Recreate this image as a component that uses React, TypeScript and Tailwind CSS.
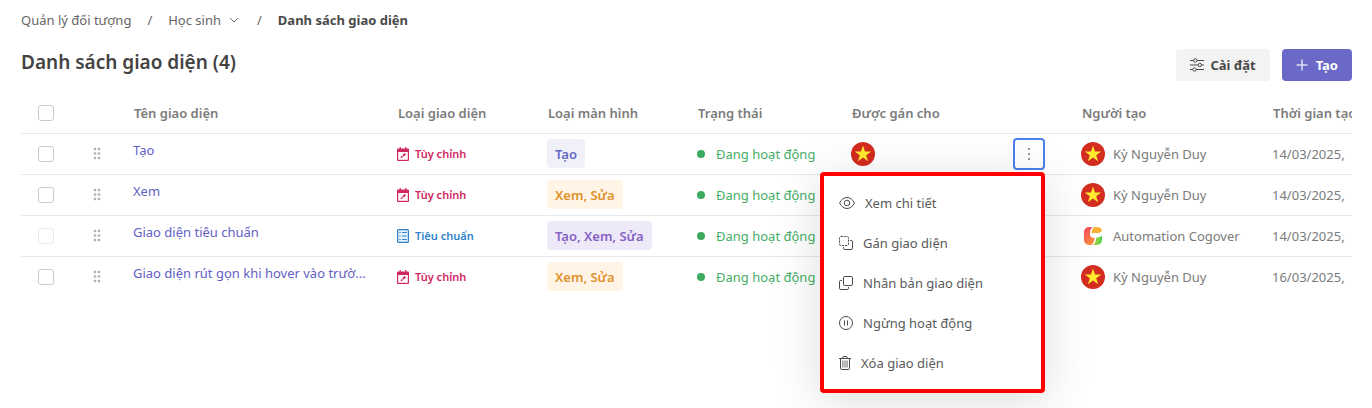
import type { ReactNode } from "react";

/* ------------------------------
   DATA
-------------------------------- */
type ScreenKind = "create" | "edit" | "all";

const ROWS: {
  id: number;
  name: string;
  custom: boolean;
  screen: string;
  kind: ScreenKind;
  creator: string;
  date: string;
}[] = [
  { id: 1, name: "Tạo", custom: true, screen: "Tạo", kind: "create", creator: "Kỳ Nguyễn Duy", date: "14/03/2025," },
  { id: 2, name: "Xem", custom: true, screen: "Xem, Sửa", kind: "edit", creator: "Kỳ Nguyễn Duy", date: "14/03/2025," },
  { id: 3, name: "Giao diện tiêu chuẩn", custom: false, screen: "Tạo, Xem, Sửa", kind: "all", creator: "Automation Cogover", date: "14/03/2025," },
  { id: 4, name: "Giao diện rút gọn khi hover vào trườ...", custom: true, screen: "Xem, Sửa", kind: "edit", creator: "Kỳ Nguyễn Duy", date: "16/03/2025," },
];

const TAG_STYLES: Record<ScreenKind, string> = {
  create: "bg-[#f0f0f9] text-[#6467c6]",
  edit: "bg-[#fff4e5] text-[#e0912c]",
  all: "bg-[#eee9f8] text-[#8561c2]",
};

/* ------------------------------
   ICONS
-------------------------------- */
const ChevronIcon = () => (
  <svg width="10" height="10" viewBox="0 0 10 10" fill="none" stroke="#666">
    <path d="M1.2 3.2L5 7l3.8-3.8" />
  </svg>
);

const SlidersIcon = () => (
  <svg width="14" height="14" viewBox="0 0 14 14" fill="none" stroke="#4a4a4a">
    <path d="M0 2.5h3.5M7 2.5h7M0 7h8M11.5 7H14M0 11.5h2.7M6.3 11.5H14" />
    <circle cx="5.2" cy="2.5" r="1.7" />
    <circle cx="9.8" cy="7" r="1.7" />
    <circle cx="4.5" cy="11.5" r="1.7" />
  </svg>
);

const PlusIcon = () => (
  <svg width="12" height="12" viewBox="0 0 12 12" fill="none" stroke="#dcdcf5" strokeWidth="1.5">
    <path d="M6 .5v11M.5 6h11" />
  </svg>
);

const GripIcon = () => (
  <svg width="8" height="13" viewBox="0 0 8 13" fill="none" stroke="#888" strokeWidth="0.8">
    {[2, 6.5, 11].map((y) => (
      <g key={y}>
        <circle cx="2" cy={y} r="0.9" />
        <circle cx="6" cy={y} r="0.9" />
      </g>
    ))}
  </svg>
);

const CustomIcon = () => (
  <svg className="shrink-0" width="12" height="14" viewBox="0 0 12 14">
    <path d="M2.6 0h1.2v1.4h4.4V0h1.2v1.4H11a1 1 0 0 1 1 1V13a1 1 0 0 1-1 1H1a1 1 0 0 1-1-1V2.4a1 1 0 0 1 1-1h1.6z" fill="#d1275f" />
    <path d="M1.2 5h9.6v7.8H1.2z" fill="#fff" />
    <path d="M3.6 11.2l.4-1.6.7-.7 1.2 1.2-.7.7zM5.3 8.300l2-2 .6-.2.900.9-.2.700-2 2z" fill="#d1275f" />
  </svg>
);

const StandardIcon = () => (
  <svg className="shrink-0" width="12" height="14" viewBox="0 0 12 14" fill="none" stroke="#2f83cb">
    <rect x="0.6" y="0.6" width="10.8" height="12.8" rx="1" strokeWidth="1.2" fill="#e4f1fb" />
    <path d="M2.3 3.5h1.4M5 3.5h4.7M2.3 7h1.4M5 7h4.7M2.3 10.500h1.4M5 10.500h4.7" />
  </svg>
);

const DotsIcon = () => (
  <svg width="4" height="14" viewBox="0 0 4 14" fill="#777">
    <circle cx="2" cy="2" r="1" />
    <circle cx="2" cy="7" r="1" />
    <circle cx="2" cy="12" r="1" />
  </svg>
);

const FlagAvatar = () => (
  <svg className="shrink-0" width="24" height="24" viewBox="0 0 24 24">
    <circle cx="12" cy="12" r="12" fill="#d32c20" />
    <path d="M12 3.500l2 6h6.200l-5 3.700 1.900 6-5.100-3.700-5.100 3.700 1.900-6-5-3.700H10z" fill="#ffeb2e" />
  </svg>
);

const CogoverLogo = () => (
  <svg className="shrink-0" width="24" height="24" viewBox="0 0 24 24">
    <defs>
      <linearGradient id="cg-left" x1="0" y1="0" x2="0.5" y2="1">
        <stop offset="0" stopColor="#f4405f" />
        <stop offset="1" stopColor="#fb8f3e" />
      </linearGradient>
      <linearGradient id="cg-right" x1="0" y1="0" x2="1" y2="0">
        <stop offset="0" stopColor="#b9c83a" />
        <stop offset="1" stopColor="#4fd54f" />
      </linearGradient>
    </defs>
    <path d="M8 3h3.500C9.800 4.500 9 6.500 9 9v1.500c0 2 1.200 3.200 3.200 3.200h1.300c0 3.300-1 5.800-3.200 7.300H8a5 5 0 0 1-5-5V8a5 5 0 0 1 5-5z" fill="url(#cg-left)" />
    <path d="M13.500 3H16c2.800 0 4.600 1.500 5 4-1.500 1.700-3.300 2-5.500 2H10.700c0-2.700.8-4.800 2.800-6z" fill="#fbb034" />
    <path d="M21 11.500V16a5 5 0 0 1-5 5h-3.700c1.900-1.700 2.800-4.300 2.900-7.400 2.400-.1 4.300-.7 5.800-2.100z" fill="url(#cg-right)" />
  </svg>
);

const EyeIcon = () => (
  <svg width="16" height="14" viewBox="0 0 16 14" fill="none" stroke="#4a4a4a">
    <path d="M.6 7C2.4 3.4 5 1.5 8 1.5S13.6 3.4 15.4 7C13.6 10.6 11 12.5 8 12.5S2.4 10.6.6 7z" />
    <circle cx="8" cy="7" r="2.8" />
  </svg>
);

const AssignIcon = () => (
  <svg width="14" height="14" viewBox="0 0 14 14" fill="none" stroke="#4a4a4a">
    <rect x="0.5" y="0.5" width="9" height="9" rx="1.5" strokeDasharray="2.2 1" />
    <path d="M11 4.500h1.200a1.300 1.300 0 0 1 1.300 1.300v6.400a1.300 1.300 0 0 1-1.300 1.300H5.800a1.300 1.300 0 0 1-1.300-1.300V11" />
  </svg>
);

const CopyIcon = () => (
  <svg width="14" height="14" viewBox="0 0 14 14" fill="none" stroke="#4a4a4a">
    <rect x="4.5" y="0.5" width="9" height="9" rx="1.3" />
    <path d="M3 4.500H1.800A1.300 1.300 0 0 0 .5 5.800v6.400a1.300 1.300 0 0 0 1.300 1.300h6.400a1.300 1.300 0 0 0 1.300-1.300V11" />
  </svg>
);

const PauseIcon = () => (
  <svg width="14" height="14" viewBox="0 0 14 14" fill="none" stroke="#4a4a4a">
    <circle cx="7" cy="7" r="6.5" />
    <path d="M5.500 4.500v5M8.500 4.500v5" />
  </svg>
);

const TrashIcon = () => (
  <svg width="12" height="14" viewBox="0 0 12 14" fill="none" stroke="#4a4a4a">
    <path d="M0 2.500h12M3.500 2.300L4.300.5h3.400l.8 1.800M1.500 2.500v9.700a1.300 1.300 0 0 0 1.300 1.300h6.400a1.300 1.300 0 0 0 1.300-1.300V2.500" />
    <path d="M3.900 4.500v7M6 4.500v7M8.100 4.500v7" strokeWidth="0.8" />
  </svg>
);

/* ------------------------------
   SUB-COMPONENTS
-------------------------------- */
const MENU: { label: string; icon: ReactNode }[] = [
  { label: "Xem chi tiết", icon: <EyeIcon /> },
  { label: "Gán giao diện", icon: <AssignIcon /> },
  { label: "Nhân bản giao diện", icon: <CopyIcon /> },
  { label: "Ngừng hoạt động", icon: <PauseIcon /> },
  { label: "Xóa giao diện", icon: <TrashIcon /> },
];

const RowMenu = () => (
  <div
    role="menu"
    className="absolute top-[34px] right-0 z-10 w-[225px] rounded-sm border-4 border-[#ff0000] bg-white pt-[7px] pb-1.5 shadow-[0_8px_50px_rgba(0,0,0,0.14)]"
  >
    {MENU.map((item) => (
      <button
        key={item.label}
        role="menuitem"
        className="flex h-10 w-full items-center gap-2.5 pl-[15px] text-left text-[#5a5a5a]"
      >
        {item.icon}
        {item.label}
      </button>
    ))}
  </div>
);

const Checkbox = ({ label, disabled }: { label: string; disabled?: boolean }) => (
  <input
    type="checkbox"
    aria-label={label}
    disabled={disabled}
    className="block size-4 appearance-none rounded-[3px] border border-[#cbcbcb] bg-white disabled:border-[#ebebeb]"
  />
);

/* ------------------------------
   MAIN COMPONENT
-------------------------------- */
export default function App() {
  return (
    <div className="flex min-h-screen flex-col bg-white pr-5 pl-[21px] font-['Noto_Sans',sans-serif] text-[13px] leading-5 text-[#7b7b7b]">
      <nav className="flex items-center pt-2.5 text-[#666]">
        <a href="#objects">Quản lý đối tượng</a>
        <span className="px-4">/</span>
        <a href="#student" className="flex items-center gap-2">
          Học sinh
          <ChevronIcon />
        </a>
        <span className="pr-4 pl-[18px]">/</span>
        <span className="font-bold text-[#4a4a4a]">Danh sách giao diện</span>
      </nav>

      <header className="mt-[19px] flex items-start justify-between">
        <h1 className="text-[19px] leading-[26px] font-semibold text-[#434343]">Danh sách giao diện (4)</h1>
        <div className="flex gap-3 font-bold">
          <button className="flex h-8 items-center gap-1.5 rounded bg-[#f3f3f3] px-3.5 text-[#4a4a4a]">
            <SlidersIcon />
            Cài đặt
          </button>
          <button className="flex h-8 items-center gap-2 rounded bg-[#6a69c8] px-3.5 text-white">
            <PlusIcon />
            Tạo
          </button>
        </div>
      </header>

      <div className="mt-3 flex-1 overflow-hidden">
        <table className="w-full min-w-[1436px] table-fixed text-left">
          <thead>
            <tr className="h-10 border-b border-[#e8e8eb] *:font-semibold">
              <th className="w-[50px] pl-[17px]">
                <Checkbox label="Chọn tất cả" />
              </th>
              <th className="w-[46px]" />
              <th className="w-[264px] pl-[17px]">Tên giao diện</th>
              <th className="w-[150px] pl-[17px]">Loại giao diện</th>
              <th className="w-[150px] pl-[17px]">Loại màn hình</th>
              <th className="w-[154px] pl-[17px]">Trạng thái</th>
              <th className="w-[230px] pl-[17px]">Được gán cho</th>
              <th className="w-[191px] pl-[17px]">Người tạo</th>
              <th className="pl-[17px]">Thời gian tạo</th>
            </tr>
          </thead>
          <tbody>
            {ROWS.map((row) => (
              <tr key={row.id} className="h-[41px] border-b border-[#e8e8eb] last:border-b-0">
                <td className="pl-[17px]">
                  <Checkbox label={row.name} disabled={!row.custom} />
                </td>
                <td className="pl-[22px]">
                  <GripIcon />
                </td>
                <td className="pb-2 pl-4">
                  <a href={`#layout-${row.id}`} className="block whitespace-nowrap text-[#5f61c4]">
                    {row.name}
                  </a>
                </td>
                <td className="pl-4">
                  <span
                    className={`flex items-center gap-1.5 text-[11px] font-semibold ${row.custom ? "text-[#d1275f]" : "text-[#2f83cb]"}`}
                  >
                    {row.custom ? <CustomIcon /> : <StandardIcon />}
                    {row.custom ? "Tùy chỉnh" : "Tiêu chuẩn"}
                  </span>
                </td>
                <td className="pl-4">
                  <span className={`inline-flex h-[29px] items-center rounded px-2 align-middle font-semibold ${TAG_STYLES[row.kind]}`}>
                    {row.screen}
                  </span>
                </td>
                <td className="pl-4">
                  <span className="flex items-center gap-[11px] whitespace-nowrap text-[#45ad66]">
                    <span className="size-2 rounded-full bg-[#3dab5f]" />
                    Đang hoạt động
                  </span>
                </td>
                <td className="pr-5 pl-4">
                  {row.id === 1 && (
                    <div className="flex items-center justify-between">
                      <FlagAvatar />
                      <div className="relative">
                        <button
                          aria-label="Thao tác"
                          aria-expanded="true"
                          className="flex size-8 items-center justify-center rounded border-2 border-[#4a80e8] bg-white"
                        >
                          <DotsIcon />
                        </button>
                        <RowMenu />
                      </div>
                    </div>
                  )}
                </td>
                <td className="pl-4">
                  <span className="flex items-center gap-2 whitespace-nowrap">
                    {row.custom ? <FlagAvatar /> : <CogoverLogo />}
                    {row.creator}
                  </span>
                </td>
                <td className="pl-4 whitespace-nowrap">{row.date}</td>
              </tr>
            ))}
          </tbody>
        </table>
      </div>
    </div>
  );
}
